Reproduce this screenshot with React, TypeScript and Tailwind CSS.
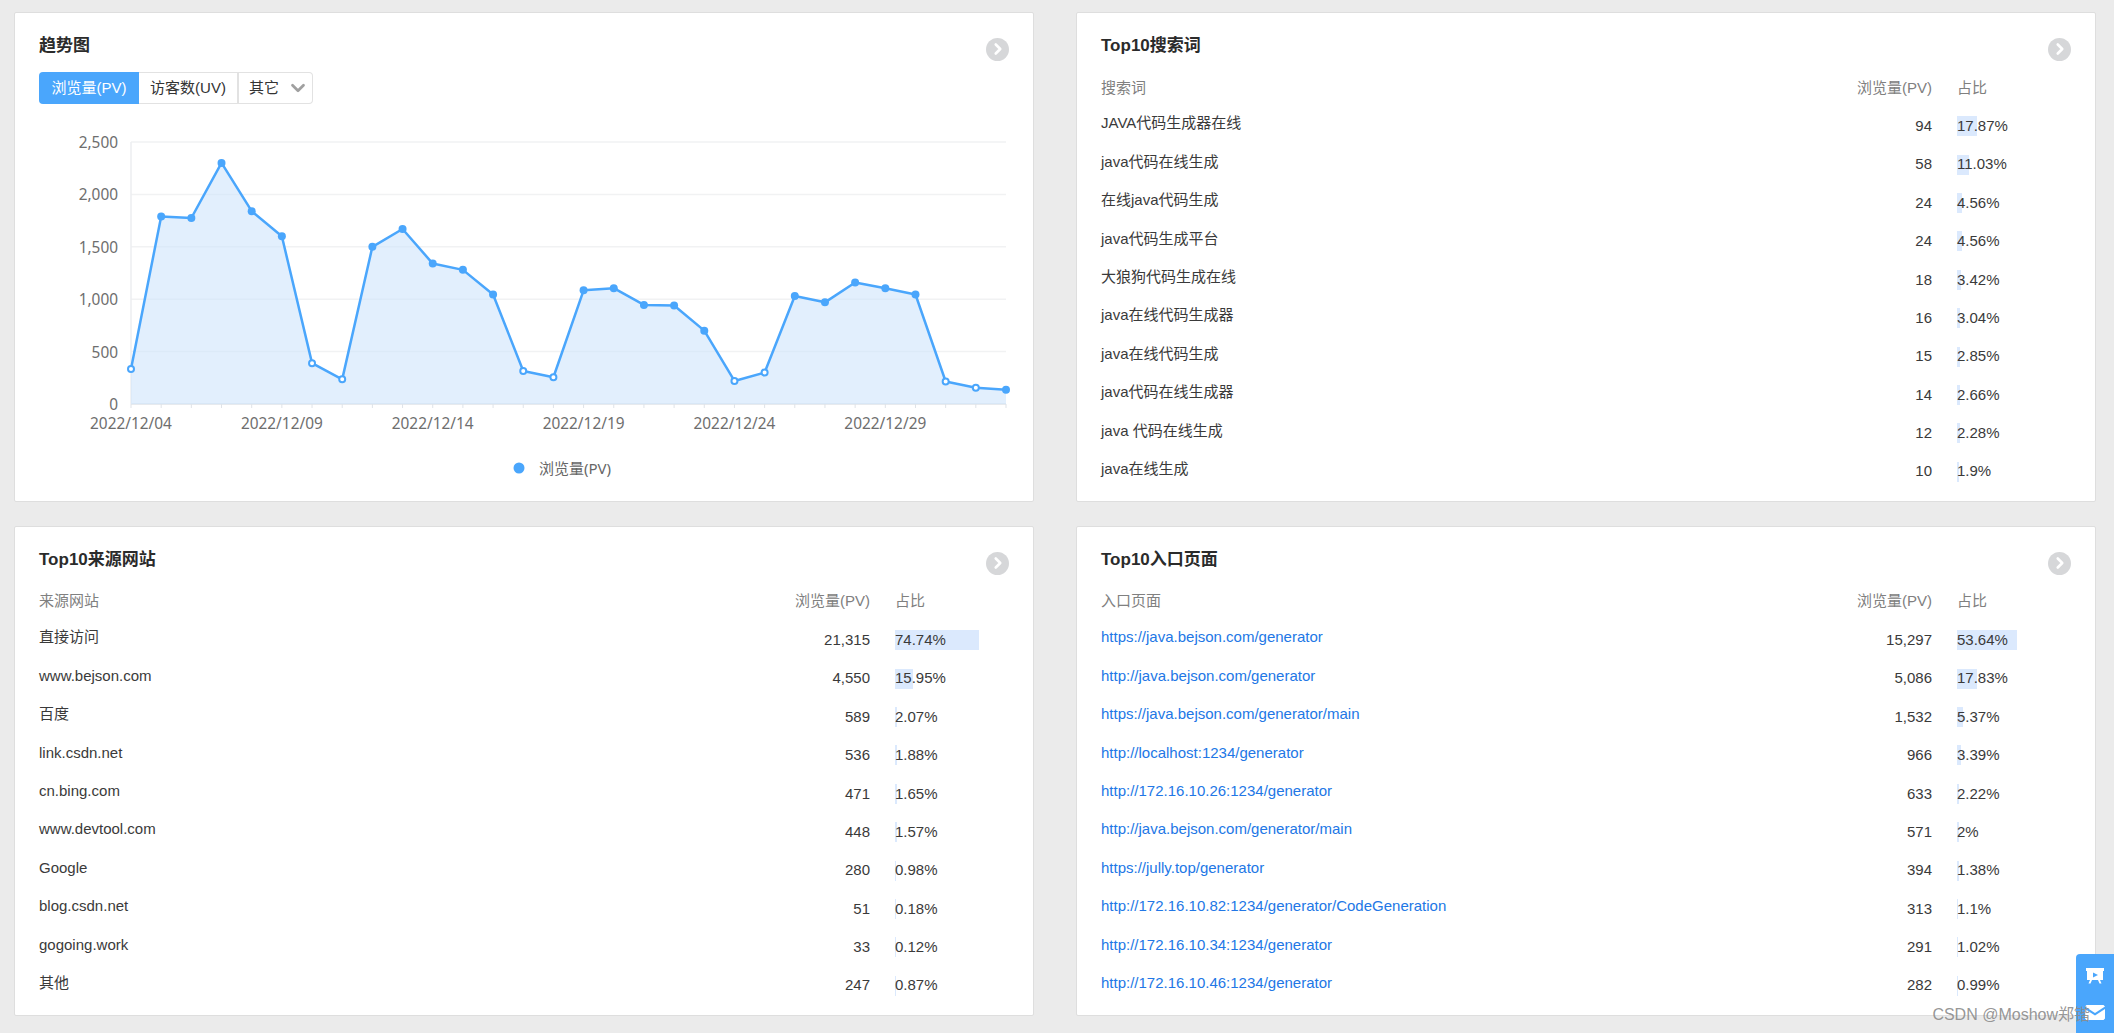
import { ChevronDown, ChevronRight } from 'lucide-react'

const FONT = "font-['Liberation_Sans','Noto_Sans_CJK_SC',sans-serif]"

const PV = [335, 1790, 1775, 2300, 1840, 1600, 390, 235, 1500, 1670, 1340, 1280, 1045, 315, 255, 1085, 1105, 945, 940, 700, 220, 300, 1030, 970, 1160, 1105, 1045, 215, 155, 135]

type Row = [string, string, number]

const searchRows: Row[] = [
  ['JAVA代码生成器在线', '94', 17.87],
  ['java代码在线生成', '58', 11.03],
  ['在线java代码生成', '24', 4.56],
  ['java代码生成平台', '24', 4.56],
  ['大狼狗代码生成在线', '18', 3.42],
  ['java在线代码生成器', '16', 3.04],
  ['java在线代码生成', '15', 2.85],
  ['java代码在线生成器', '14', 2.66],
  ['java 代码在线生成', '12', 2.28],
  ['java在线生成', '10', 1.9],
]

const sourceRows: Row[] = [
  ['直接访问', '21,315', 74.74],
  ['www.bejson.com', '4,550', 15.95],
  ['百度', '589', 2.07],
  ['link.csdn.net', '536', 1.88],
  ['cn.bing.com', '471', 1.65],
  ['www.devtool.com', '448', 1.57],
  ['Google', '280', 0.98],
  ['blog.csdn.net', '51', 0.18],
  ['gogoing.work', '33', 0.12],
  ['其他', '247', 0.87],
]

const entryRows: Row[] = [
  ['https://java.bejson.com/generator', '15,297', 53.64],
  ['http://java.bejson.com/generator', '5,086', 17.83],
  ['https://java.bejson.com/generator/main', '1,532', 5.37],
  ['http://localhost:1234/generator', '966', 3.39],
  ['http://172.16.10.26:1234/generator', '633', 2.22],
  ['http://java.bejson.com/generator/main', '571', 2],
  ['https://jully.top/generator', '394', 1.38],
  ['http://172.16.10.82:1234/generator/CodeGeneration', '313', 1.1],
  ['http://172.16.10.34:1234/generator', '291', 1.02],
  ['http://172.16.10.46:1234/generator', '282', 0.99],
]

function Card({ title, children }: { title: string; children: React.ReactNode }) {
  return (
    <div className="h-[490px] w-[1020px] rounded-[2px] border border-[#dedede] bg-white pl-[24px] pr-[25px] pt-[21px]">
      <div className="flex h-[24px] items-center justify-between">
        <h2 className="text-[17px] font-bold leading-[24px] text-[#2b2b2b]">{title}</h2>
        <div className="mr-[-1px] mt-[6px] flex h-[23px] w-[23px] items-center justify-center rounded-full bg-[#d6d7d9]">
          <ChevronRight className="h-[18px] w-[18px] text-white" strokeWidth={3.5} />
        </div>
      </div>
      {children}
    </div>
  )
}

function RankTable({ head, rows, link, tight }: { head: string; rows: Row[]; link?: boolean; tight?: boolean }) {
  return (
    <div className={tight ? 'mt-[17px]' : 'mt-[18px]'}>
      <div className="flex h-[24px] items-center text-[15px] text-[#808080]">
        <div className="flex-1">{head}</div>
        <div className="w-[120px] text-right">浏览量(PV)</div>
        <div className="ml-[25px] w-[113px]">占比</div>
      </div>
      <div className={tight ? 'mt-[8px]' : 'mt-[7px]'}>
        {rows.map(([name, pv, pct]) => (
          <div key={name} className="flex h-[38.4px] items-center text-[15px] text-[#3a3a3a]">
            <div className={`-mt-[5px] flex-1 ${link ? 'text-[#2277e6]' : ''}`}>{name}</div>
            <div className="w-[120px] text-right">{pv}</div>
            <div className="relative ml-[25px] flex h-[20px] w-[113px] items-center">
              <div className="absolute left-0 top-0 h-[20px] bg-[#dbe9fd]" style={{ width: `${pct * 1.12}px` }} />
              <span className="relative">{pct}%</span>
            </div>
          </div>
        ))}
      </div>
    </div>
  )
}

function TrendChart() {
  const left = 116
  const step = 875 / 29
  const bottom = 290
  const scale = 262 / 2500
  const pts = PV.map((v, i) => [left + i * step, bottom - v * scale])
  const line = pts.map(p => p.join(',')).join(' ')
  const area = `${left},${bottom} ${line} ${left + 875},${bottom}`
  const textFont = { fontFamily: "'Noto Sans', 'Noto Sans CJK SC', sans-serif" }

  return (
    <svg width="1010" height="370" className="mt-[10px] block" style={textFont}>
      {[0, 500, 1000, 1500, 2000, 2500].map(v => (
        <g key={v}>
          <line x1={left} x2={left + 875} y1={bottom - v * scale} y2={bottom - v * scale} stroke={v === 0 ? '#dfe3e8' : '#f1f2f3'} strokeWidth="1.5" />
          <text x={left - 13} y={bottom - v * scale + 6} textAnchor="end" fontSize="15.4" fill="#6e6e6e">{v.toLocaleString('en-US')}</text>
        </g>
      ))}
      <line x1={left} x2={left} y1={bottom - 262} y2={bottom} stroke="#eceef0" strokeWidth="1.5" />
      {pts.map(([x], i) => (
        <line key={i} x1={x} x2={x} y1={bottom} y2={bottom + 4} stroke="#dfe3e8" />
      ))}
      <polygon points={area} fill="#cfe5fb" fillOpacity="0.6" />
      <polyline points={line} fill="none" stroke="#4aa6fc" strokeWidth="2.5" strokeLinejoin="round" />
      {pts.map(([x, y], i) => {
        const hollow = PV[i] < 500 && i !== 29
        return (
          <circle key={i} cx={x} cy={y} r={hollow ? 3 : 4} fill={hollow ? '#fff' : '#4aa6fc'} stroke="#4aa6fc" strokeWidth={hollow ? 2 : 0} />
        )
      })}
      {['2022/12/04', '2022/12/09', '2022/12/14', '2022/12/19', '2022/12/24', '2022/12/29'].map((d, i) => (
        <text key={d} x={left + i * 5 * step} y={bottom + 25} textAnchor="middle" fontSize="15.4" fill="#6e6e6e">{d}</text>
      ))}
      <circle cx="504" cy="354" r="5.5" fill="#4aa6fc" />
      <text x="524" y="360" fontSize="15" fill="#666">浏览量(PV)</text>
    </svg>
  )
}

export default function App() {
  return (
    <div className={`relative h-[1033px] w-[2114px] overflow-hidden bg-[#ebebeb] ${FONT}`}>
      <div className="grid grid-cols-[1020px_1020px] gap-x-[42px] gap-y-[24px] pl-[14px] pt-[12px]">
        <Card title="趋势图">
          <div className="mt-[14px] flex h-[32px] w-[274px] text-[15px] text-[#333]">
            <div className="flex w-[100px] items-center justify-center rounded-l-[4px] bg-[#4aa6fc] text-white">浏览量(PV)</div>
            <div className="flex w-[98px] items-center justify-center border-y border-[#e2e2e2]">访客数(UV)</div>
            <div className="flex flex-1 items-center justify-between rounded-r-[4px] border border-l-2 border-[#e2e2e2] pl-[10px] pr-[3px]">
              其它
              <ChevronDown className="h-[22px] w-[22px] text-[#a0a0a0]" strokeWidth={3} />
            </div>
          </div>
          <div className="-ml-[24px]">
            <TrendChart />
          </div>
        </Card>
        <Card title="Top10搜索词">
          <RankTable head="搜索词" rows={searchRows} />
        </Card>
        <Card title="Top10来源网站">
          <RankTable head="来源网站" rows={sourceRows} tight />
        </Card>
        <Card title="Top10入口页面">
          <RankTable head="入口页面" rows={entryRows} link tight />
        </Card>
      </div>

      {/* floating feedback bar */}
      <div className="absolute bottom-0 right-0 flex h-[79px] w-[38px] flex-col items-center rounded-tl-[4px] bg-[#4aa6fc] pt-[13px]">
        <svg width="20" height="18" viewBox="0 0 20 18" fill="#fff">
          <path d="M1 1h18v3h-1v9h-3l1.5 3.5h-2L13 13H7l-1.500 3.500h-2L5 13H2V4H1z" />
          <path d="M8 5.500l5 2.500-5 2.500z" fill="#4aa6fc" />
        </svg>
        <svg className="mt-[20px]" width="20" height="15" viewBox="0 0 20 15" fill="#fff">
          <path d="M0 1.500L1.500 0h17L20 1.500 10 8z" />
          <path d="M0 4l10 6.500L20 4v9.500L18.500 15h-17L0 13.500z" />
        </svg>
      </div>
      <div className="absolute bottom-[8px] right-[24px] text-[16px] leading-[20px] text-[#8a8a8a]/90">CSDN @Moshow郑锴</div>
    </div>
  )
}
